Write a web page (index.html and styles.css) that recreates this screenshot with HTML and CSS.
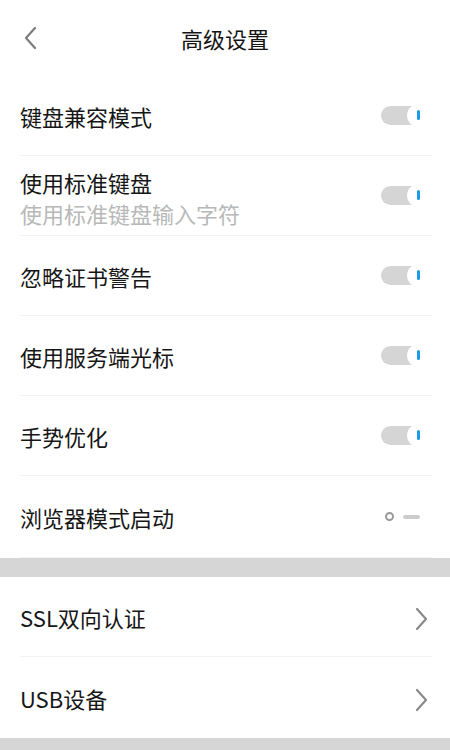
FILE: index.html
```html
<!DOCTYPE html>
<html lang="zh-CN">
<head>
<meta charset="utf-8">
<title>高级设置</title>
<link rel="stylesheet" href="styles.css">
</head>
<body>
<div class="page">
  <header class="topbar">
    <div class="back">
      <svg width="14" height="24" viewBox="0 0 14 24"><path d="M12 2 L3 12 L12 22" fill="none" stroke="#7d7d7d" stroke-width="2.2" stroke-linecap="round" stroke-linejoin="round"/></svg>
    </div>
    <h1 class="title">高级设置</h1>
    <div></div>
  </header>

  <section class="group">
    <div class="row">
      <div class="label">键盘兼容模式</div>
      <div class="switch on"><span class="track"></span><span class="thumb"><i class="bar"></i></span></div>
    </div>
    <div class="row">
      <div class="label two">
        <div class="main">使用标准键盘</div>
        <div class="sub">使用标准键盘输入字符</div>
      </div>
      <div class="switch on"><span class="track"></span><span class="thumb"><i class="bar"></i></span></div>
    </div>
    <div class="row">
      <div class="label">忽略证书警告</div>
      <div class="switch on"><span class="track"></span><span class="thumb"><i class="bar"></i></span></div>
    </div>
    <div class="row">
      <div class="label">使用服务端光标</div>
      <div class="switch on"><span class="track"></span><span class="thumb"><i class="bar"></i></span></div>
    </div>
    <div class="row">
      <div class="label">手势优化</div>
      <div class="switch on"><span class="track"></span><span class="thumb"><i class="bar"></i></span></div>
    </div>
    <div class="row last-in-group">
      <div class="label">浏览器模式启动</div>
      <div class="switch off"><span class="ring"></span><span class="dash"></span></div>
    </div>
  </section>

  <div class="band"></div>

  <section class="group">
    <div class="row">
      <div class="label">SSL双向认证</div>
      <svg class="chev" width="14" height="24" viewBox="0 0 14 24"><path d="M2 2 L11 12 L2 22" fill="none" stroke="#8a8a8a" stroke-width="2.2" stroke-linecap="round" stroke-linejoin="round"/></svg>
    </div>
    <div class="row noline">
      <div class="label">USB设备</div>
      <svg class="chev" width="14" height="24" viewBox="0 0 14 24"><path d="M2 2 L11 12 L2 22" fill="none" stroke="#8a8a8a" stroke-width="2.2" stroke-linecap="round" stroke-linejoin="round"/></svg>
    </div>
  </section>

  <div class="band bottom"></div>
</div>
</body>
</html>
```

FILE: styles.css
```css
html, body {
  margin: 0;
  padding: 0;
  background: #ffffff;
}

body {
  font-family: "Noto Sans CJK SC", "Noto Sans", Roboto, sans-serif;
  color: #1e1e1e;
}

.page {
  width: 450px;
  height: 750px;
  overflow: hidden;
  display: flex;
  flex-direction: column;
}

.topbar {
  height: 76px;
  display: grid;
  grid-template-columns: 1fr auto 1fr;
  align-items: center;
}

.back {
  padding-left: 23px;
  display: flex;
  align-items: center;
}

.title {
  margin: 0;
  font-size: 22px;
  font-weight: 400;
  line-height: 28px;
  color: #141414;
}

.group {
  display: flex;
  flex-direction: column;
}

.row {
  height: 80px;
  margin: 0 18px 0 20px;
  border-bottom: 1px solid #f3f3f3;
  box-sizing: border-box;
  display: flex;
  align-items: center;
  justify-content: space-between;
}

.row.last-in-group {
  height: 82px;
}

.row.noline {
  border-bottom: none;
  height: 81px;
}

.label {
  font-size: 22px;
  line-height: 30px;
  color: #161616;
}

.label.two {
  display: flex;
  flex-direction: column;
  padding-top: 4px;
}

.label.two .sub {
  color: #b8b8b8;
  line-height: 32px;
}

.switch {
  position: relative;
  width: 51px;
  height: 24px;
  flex: none;
}

.switch.on .track {
  position: absolute;
  left: 0;
  top: 2px;
  width: 42px;
  height: 19px;
  border-radius: 10px;
  background: #d5d5d5;
}

.switch.on .thumb {
  position: absolute;
  right: 2px;
  top: 0;
  width: 23px;
  height: 23px;
  border-radius: 50%;
  background: #ffffff;
  box-shadow: 0 0 1px rgba(0, 0, 0, 0.06);
  display: flex;
  align-items: center;
  justify-content: center;
}

.switch.on .bar {
  display: block;
  width: 3px;
  height: 10px;
  border-radius: 2px;
  background: #1e9be8;
}

.switch.off {
  width: auto;
  display: flex;
  align-items: center;
  gap: 9px;
  margin-right: 12px;
}

.switch.off .ring {
  width: 5px;
  height: 5px;
  border: 2px solid #999999;
  border-radius: 50%;
}

.switch.off .dash {
  width: 17px;
  height: 4px;
  border-radius: 2px;
  background: #cccccc;
}

.chev {
  display: block;
  margin-right: 3px;
  margin-top: 4px;
}

.band {
  height: 19px;
  background: #d6d6d6;
  flex: none;
}

.band.bottom {
  flex: 1;
}
```
